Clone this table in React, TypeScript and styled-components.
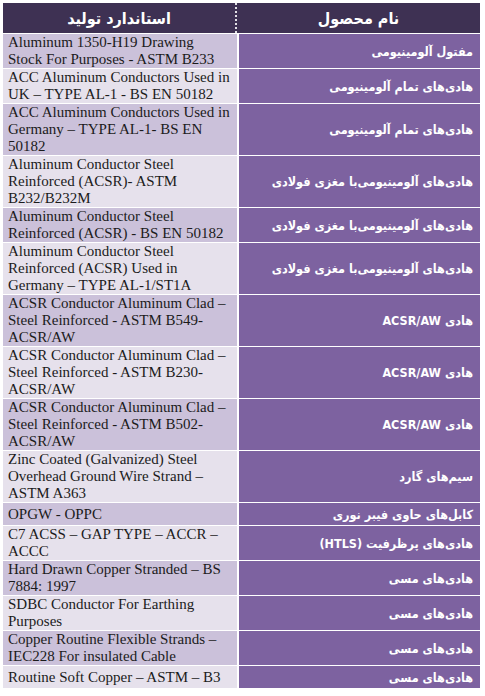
import React from 'react';
import styled, { createGlobalStyle } from 'styled-components';

interface Product {
  name: string
  standard: string
}

const GlobalStyle = createGlobalStyle`
  body {
    margin: 0;
    background: #ffffff;
  }
`;

const Table = styled.div`
  direction: rtl;
  width: 477px;
  margin: 3px 0 0 3px;
  display: flex;
  flex-direction: column;
  gap: 1px;
  background: #ffffff;
`;

const HeaderRow = styled.div`
  display: grid;
  grid-template-columns: 243px 1fr;
  height: 30px;
  background: #3e3153;
`;

const HeaderCell = styled.div<{ $divider?: boolean }>`
  display: flex;
  align-items: center;
  justify-content: center;
  color: #ffffff;
  font-family: "DejaVu Sans Condensed", "DejaVu Sans", sans-serif;
  font-weight: bold;
  font-size: 16px;
  border-right: ${(p) => (p.$divider ? '2px dotted rgba(255, 255, 255, 0.85)' : 'none')};
`;

const Row = styled.div`
  display: grid;
  grid-template-columns: 241px 1fr;
  column-gap: 2px;
  min-height: 22px;
`;

const NameCell = styled.div`
  display: flex;
  align-items: center;
  justify-content: flex-start;
  padding: 0 7px 0 6px;
  background: #7d62a0;
  color: #ffffff;
  font-family: "DejaVu Sans Condensed", "DejaVu Sans", sans-serif;
  font-weight: bold;
  font-size: 12.5px;
  white-space: nowrap;
`;

const StandardCell = styled.div<{ $alt: boolean }>`
  direction: ltr;
  display: flex;
  align-items: center;
  padding: 0 6px 0 5px;
  background: ${(p) => (p.$alt ? '#e6e1ec' : '#cbc1da')};
  color: #1b1b1b;
  font-family: "Liberation Serif", "Times New Roman", serif;
  font-size: 15px;
  line-height: 17px;
  text-align: left;
`;

const products: Product[] = [
  { name: 'مفتول آلومینیومی', standard: 'Aluminum 1350-H19 Drawing Stock For Purposes - ASTM B233' },
  { name: 'هادی‌های تمام آلومینیومی', standard: 'ACC Aluminum Conductors Used in UK – TYPE AL-1 - BS EN 50182' },
  { name: 'هادی‌های تمام آلومینیومی', standard: 'ACC Aluminum Conductors Used in Germany – TYPE AL-1- BS EN 50182' },
  { name: 'هادی‌های آلومینیومی‌با مغزی فولادی', standard: 'Aluminum Conductor Steel Reinforced (ACSR)- ASTM B232/B232M' },
  { name: 'هادی‌های آلومینیومی‌با مغزی فولادی', standard: 'Aluminum Conductor Steel Reinforced (ACSR) - BS EN 50182' },
  { name: 'هادی‌های آلومینیومی‌با مغزی فولادی', standard: 'Aluminum Conductor Steel Reinforced (ACSR) Used in Germany – TYPE AL-1/ST1A' },
  { name: 'هادی ACSR/AW', standard: 'ACSR Conductor Aluminum Clad – Steel Reinforced - ASTM B549-ACSR/AW' },
  { name: 'هادی ACSR/AW', standard: 'ACSR Conductor Aluminum Clad – Steel Reinforced - ASTM B230-ACSR/AW' },
  { name: 'هادی ACSR/AW', standard: 'ACSR Conductor Aluminum Clad – Steel Reinforced - ASTM B502-ACSR/AW' },
  { name: 'سیم‌های گارد', standard: 'Zinc Coated (Galvanized) Steel Overhead Ground Wire Strand – ASTM A363' },
  { name: 'کابل‌های حاوی فیبر نوری', standard: 'OPGW - OPPC' },
  { name: 'هادی‌های پرظرفیت (HTLS)', standard: 'C7 ACSS – GAP TYPE – ACCR – ACCC' },
  { name: 'هادی‌های مسی', standard: 'Hard Drawn Copper Stranded – BS 7884: 1997' },
  { name: 'هادی‌های مسی', standard: 'SDBC Conductor For Earthing Purposes' },
  { name: 'هادی‌های مسی', standard: 'Copper Routine Flexible Strands – IEC228 For insulated Cable' },
  { name: 'هادی‌های مسی', standard: 'Routine Soft Copper – ASTM – B3' }
];

const App = () => {
  return (
    <>
      <GlobalStyle />
      <Table>
        <HeaderRow>
          <HeaderCell>نام محصول</HeaderCell>
          <HeaderCell $divider>استاندارد تولید</HeaderCell>
        </HeaderRow>
        {products.map((item, i) => (
          <Row key={i}>
            <NameCell>{item.name}</NameCell>
            <StandardCell $alt={i % 2 === 1}>{item.standard}</StandardCell>
          </Row>
        ))}
      </Table>
    </>
  );
};

export default App;
